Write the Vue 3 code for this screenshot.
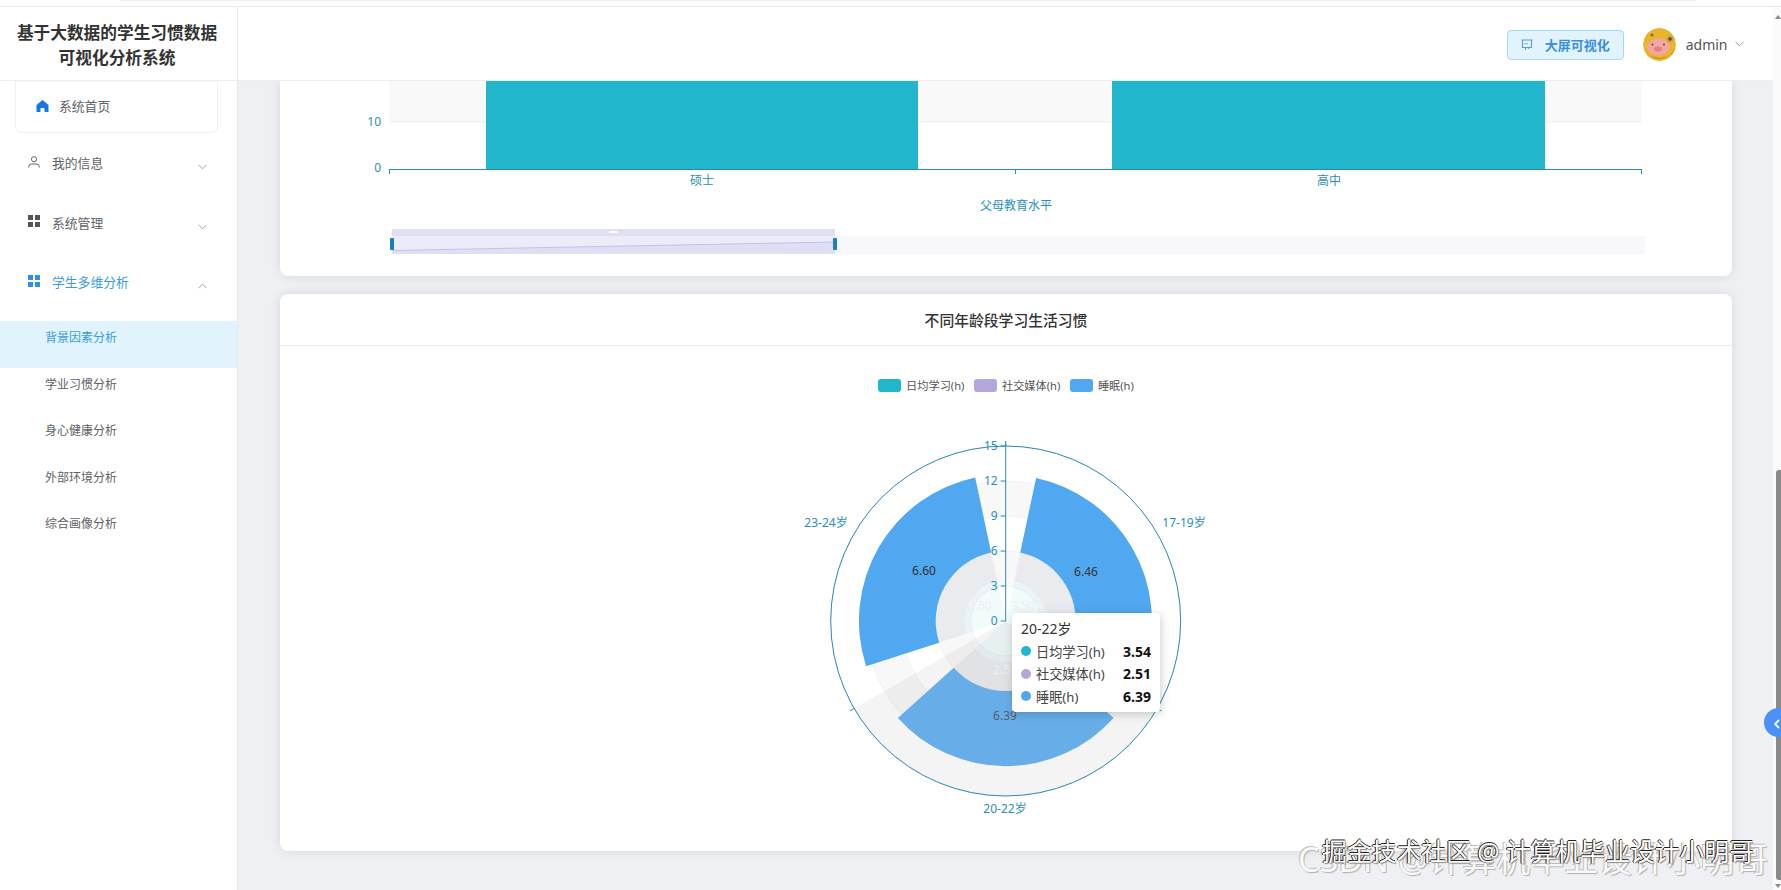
<script setup>
const cx = 1005.7
const cy = 621
const rUnit = 175 / 15

const menus = [
  { name: '我的信息', icon: 'user' },
  { name: '系统管理', icon: 'grid' }
]
const subMenus = ['背景因素分析', '学业习惯分析', '身心健康分析', '外部环境分析', '综合画像分析']

const legend = [
  { name: '日均学习(h)', color: '#22b6cc' },
  { name: '社交媒体(h)', color: '#b3a7dc' },
  { name: '睡眠(h)', color: '#50a8f0' }
]

const ticks = [0, 3, 6, 9, 12, 15]
const rings = [
  { v: 15, fill: '#fff' },
  { v: 12, fill: '#f8f8f9' },
  { v: 9, fill: '#fff' },
  { v: 6, fill: '#f8f8f9' },
  { v: 3, fill: '#fff' }
]

function pt(r, a) {
  const rad = (a * Math.PI) / 180
  return `${(cx + r * Math.sin(rad)).toFixed(2)} ${(cy - r * Math.cos(rad)).toFixed(2)}`
}

function sector(v0, v1, a0, a1) {
  const r0 = v0 * rUnit
  const r1 = v1 * rUnit
  const large = a1 - a0 > 180 ? 1 : 0
  let d = `M${pt(r1, a0)} A${r1} ${r1} 0 ${large} 1 ${pt(r1, a1)} `
  if (r0 > 0) {
    d += `L${pt(r0, a1)} A${r0} ${r0} 0 ${large} 0 ${pt(r0, a0)} Z`
  } else {
    d += `L${cx} ${cy} Z`
  }
  return d
}

const groups = [
  { a0: 12, a1: 108, v: [3.5, 2.57, 6.46] },
  { a0: 132, a1: 228, v: [3.54, 2.51, 6.39], hover: true },
  { a0: 252, a1: 348, v: [3.5, 2.48, 6.6] }
]

const axisMarks = [0, 120, 240]

function markLine(a) {
  return `M${pt(175, a)} L${pt(180, a)}`
}
</script>

<template>
  <div class="page">
    <div class="top-strip"><div class="top-strip-inner"></div></div>
    <div class="layout">
      <aside class="sidebar">
        <div class="logo">基于大数据的学生习惯数据<br />可视化分析系统</div>
        <nav class="menu">
          <div class="menu-home">
            <svg class="home-icon" viewBox="0 0 12 12" width="13" height="12">
              <path d="M6 0 L12 5 V12 H8 V8 H4 V12 H0 V5 Z" fill="#1677e8" />
            </svg>
            <span>系统首页</span>
          </div>
          <div v-for="m in menus" :key="m.name" class="menu-row">
            <svg v-if="m.icon === 'user'" class="menu-icon" viewBox="0 0 12 12" width="12" height="12">
              <circle cx="6" cy="3.2" r="2.6" fill="none" stroke="#666" />
              <path d="M0.8 11.6 V10.6 Q0.8 8 3.4 8 H8.6 Q11.2 8 11.2 10.6 V11.6" fill="none" stroke="#666" />
            </svg>
            <svg v-else class="menu-icon" viewBox="0 0 12 12" width="12" height="12">
              <path d="M0 0h5v5H0zM7 0h5v5H7zM0 7h5v5H0zM7 7h5v5H7z" fill="#555" />
            </svg>
            <span>{{ m.name }}</span>
            <svg class="chevron" viewBox="0 0 10 6" width="9" height="6">
              <path d="M0.5 0.5 L5 5 L9.5 0.5" fill="none" stroke="#999" />
            </svg>
          </div>
          <div class="menu-row menu-row-active">
            <svg class="menu-icon" viewBox="0 0 12 12" width="12" height="12">
              <path d="M0 0h5v5H0zM7 0h5v5H7zM0 7h5v5H0zM7 7h5v5H7z" fill="#2f8fe6" />
            </svg>
            <span>学生多维分析</span>
            <svg class="chevron" viewBox="0 0 10 6" width="9" height="6">
              <path d="M0.5 5.5 L5 1 L9.5 5.5" fill="none" stroke="#999" />
            </svg>
          </div>
          <div class="sub-menu">
            <div
              v-for="(s, i) in subMenus"
              :key="s"
              class="sub-item"
              :class="{ 'sub-item-active': i === 0 }"
            >
              {{ s }}
            </div>
          </div>
        </nav>
      </aside>

      <div class="main">
        <header class="header">
          <button class="screen-btn">
            <svg viewBox="0 0 12 12" width="12" height="12">
              <path
                d="M0.5 1 H11.5 M1.5 1 V8.5 H10.5 V1 M4.5 8.5 V11 M7.5 8.5 V10"
                fill="none"
                stroke="#5a9ae0"
                stroke-width="1.1"
              />
              <path d="M3.4 4h1.2v1.2H3.4zM5.4 4h1.2v1.2H5.4z" fill="#5a9ae0" />
            </svg>
            <span>大屏可视化</span>
          </button>
          <svg class="avatar" viewBox="0 0 33 33" width="33" height="33">
            <circle cx="16.5" cy="16.5" r="16.5" fill="#e9b52f" />
            <path d="M1 20 A16.5 16.5 0 0 0 32 20 Q30 29 16 30 Q4 29 1 20Z" fill="#a97c22" />
            <circle cx="9" cy="7" r="1.6" fill="#8d6a1d" />
            <circle cx="27" cy="11" r="3.6" fill="#c9a24e" />
            <circle cx="27" cy="11" r="1.8" fill="#5d4a26" />
            <ellipse cx="15.5" cy="19" rx="11" ry="8.5" fill="#f3a6a2" />
            <ellipse cx="15" cy="21" rx="4" ry="2.6" fill="#e57f86" />
            <circle cx="9.5" cy="16.5" r="0.9" fill="#6b3a2c" />
            <circle cx="21" cy="16.5" r="0.9" fill="#6b3a2c" />
          </svg>
          <span class="user-name">admin</span>
          <svg class="user-chevron" viewBox="0 0 10 6" width="9" height="6">
            <path d="M0.5 0.5 L5 5 L9.5 0.5" fill="none" stroke="#999" />
          </svg>
        </header>

        <div class="content">
          <section class="card card-bar">
            <svg class="bar-chart" viewBox="280 81 1452 195" width="1452" height="195">
              <rect x="389" y="81" width="1253" height="41" fill="#f9f9fa" />
              <line x1="389" x2="1642" y1="122" y2="122" stroke="#eeeeee" />
              <rect x="486" y="81" width="432" height="88" fill="#22b6cc" />
              <rect x="1112" y="81" width="433" height="88" fill="#22b6cc" />
              <path d="M389 169.5 H1642 M389.5 169 V174 M1015.5 169 V174 M1641.5 169 V174" fill="none" stroke="#2a8cb5" />
              <text x="381" y="126" text-anchor="end" class="axis-text">10</text>
              <text x="381" y="172" text-anchor="end" class="axis-text">0</text>
              <text x="702" y="185" text-anchor="middle" class="axis-text">硕士</text>
              <text x="1329" y="185" text-anchor="middle" class="axis-text">高中</text>
              <text x="1016" y="210" text-anchor="middle" class="axis-text">父母教育水平</text>

              <rect x="835" y="236" width="810" height="18" fill="#f8f8fc" />
              <rect x="392" y="229" width="443" height="25" fill="#ecebf9" />
              <rect x="392" y="229" width="443" height="7" fill="#e0e0f2" />
              <path d="M392 250.5 L835 242 V254 H392 Z" fill="#dfdff4" />
              <path d="M392 250.5 L835 242" stroke="#c3c0ea" fill="none" />
              <rect x="609" y="231" width="8" height="2" fill="#fff" />
              <rect x="390" y="238" width="4" height="12" rx="1" fill="#1a7fc0" />
              <rect x="833" y="238" width="4" height="12" rx="1" fill="#1a7fc0" />
            </svg>
          </section>

          <section class="card card-polar">
            <div class="card-title">不同年龄段学习生活习惯</div>
            <div class="legend">
              <div v-for="l in legend" :key="l.name" class="legend-item">
                <i class="legend-swatch" :style="{ background: l.color }"></i>
                <span>{{ l.name }}</span>
              </div>
            </div>
            <div class="polar-wrap">
              <svg class="polar" viewBox="786 425 440 400" width="440" height="400">
                <circle
                  v-for="r in rings"
                  :key="r.v"
                  :cx="cx"
                  :cy="cy"
                  :r="r.v * rUnit"
                  :fill="r.fill"
                  stroke="#f2f2f2"
                />
                <path :d="sector(0, 15, 120, 240)" fill="rgba(150,150,150,0.1)" />

                <g v-for="g in groups" :key="g.a0">
                  <path :d="sector(0, g.v[0], g.a0, g.a1)" fill="#22b6cc" opacity="0.06" />
                  <path :d="sector(g.v[0], g.v[0] + g.v[1], g.a0, g.a1)" fill="#a8aab8" opacity="0.17" />
                  <path
                    :d="sector(6, g.v[0] + g.v[1] + g.v[2], g.a0, g.a1)"
                    :fill="g.hover ? '#67aee8' : '#50a8f0'"
                  />
                </g>

                <circle :cx="cx" :cy="cy" r="175" fill="none" stroke="#2a8cb5" />
                <path v-for="a in axisMarks" :key="a" :d="markLine(a)" stroke="#2a8cb5" fill="none" />
                <line :x1="cx" :x2="cx" :y1="cy" :y2="cy - 178" stroke="#2a8cb5" />
                <g v-for="t in ticks" :key="t">
                  <line :x1="cx - 5" :x2="cx" :y1="cy - t * rUnit" :y2="cy - t * rUnit" stroke="#2a8cb5" />
                  <text :x="cx - 8" :y="cy - t * rUnit + 4" text-anchor="end" class="axis-text">{{ t }}</text>
                </g>

                <text x="826" y="527" text-anchor="middle" class="axis-text">23-24岁</text>
                <text x="1184" y="527" text-anchor="middle" class="axis-text">17-19岁</text>
                <text x="1005" y="813" text-anchor="middle" class="axis-text">20-22岁</text>

                <text x="924" y="575" text-anchor="middle" class="val-text">6.60</text>
                <text x="1086" y="576" text-anchor="middle" class="val-text">6.46</text>
                <text x="1005" y="720" text-anchor="middle" class="val-text val-hover">6.39</text>
                <text x="966" y="601" text-anchor="middle" class="val-faint">2.48</text>
                <text x="1045" y="601" text-anchor="middle" class="val-faint">2.57</text>
                <text x="980" y="610" text-anchor="middle" class="val-faint">3.50</text>
                <text x="1023" y="610" text-anchor="middle" class="val-faint">3.50</text>
                <text x="1005" y="674" text-anchor="middle" class="val-faint">2.51</text>
              </svg>

              <div class="tooltip">
                <div class="tooltip-title">20-22岁</div>
                <div v-for="(l, i) in legend" :key="l.name" class="tooltip-row">
                  <i class="tooltip-dot" :style="{ background: l.color }"></i>
                  <span class="tooltip-name">{{ l.name }}</span>
                  <b class="tooltip-val">{{ groups[1].v[i].toFixed(2) }}</b>
                </div>
              </div>
            </div>
          </section>
        </div>
      </div>

      <div class="scrollbar">
        <i class="scroll-up"></i>
        <div class="scroll-space"></div>
        <div class="scroll-thumb"></div>
        <i class="scroll-down"></i>
      </div>
    </div>

    <div class="float-btn">
      <svg viewBox="0 0 6 10" width="6" height="10">
        <path d="M5 1 L1 5 L5 9" fill="none" stroke="#fff" stroke-width="1.8" />
      </svg>
    </div>
    <div class="mark-csdn">CSDN @计算机毕业设计小明哥</div>
    <div class="mark-juejin">掘金技术社区 @ 计算机毕业设计小明哥</div>
  </div>
</template>

<style scoped>
.page {
  position: relative;
  width: 1781px;
  height: 890px;
  overflow: hidden;
  display: flex;
  flex-direction: column;
  background: #fff;
  font-family: 'Noto Sans', 'Noto Sans CJK SC', sans-serif;
}
.top-strip {
  height: 6px;
  border-bottom: 1px solid #e9e9e9;
  flex-shrink: 0;
}
.top-strip-inner {
  width: 1576px;
  height: 1px;
  margin-left: 120px;
  background: #efefef;
}
.layout {
  flex: 1;
  display: flex;
  min-height: 0;
}

.sidebar {
  width: 238px;
  flex-shrink: 0;
  border-right: 1px solid #e8e9ec;
  box-sizing: border-box;
  background: #fff;
}
.logo {
  height: 74px;
  box-sizing: border-box;
  padding: 14px 3px 0 0;
  text-align: center;
  font-size: 16.7px;
  line-height: 24.5px;
  font-weight: 700;
  color: #333;
  border-bottom: 1px solid #eceef0;
}
.menu {
  display: flex;
  flex-direction: column;
  font-size: 12.8px;
  color: #606266;
}
.menu-home {
  display: flex;
  align-items: center;
  height: 52px;
  box-sizing: border-box;
  margin: 0 19px 0 15px;
  padding: 0 0 3px 20px;
  gap: 10px;
  border: 1px solid #eef0f3;
  border-top-color: #f6f6f6;
  border-radius: 0 0 7px 7px;
}
.home-icon {
  flex-shrink: 0;
}
.menu-row {
  position: relative;
  display: flex;
  align-items: center;
  height: 59.5px;
  padding-left: 28px;
  gap: 12px;
}
.menu-icon {
  position: relative;
  top: -1px;
}
.chevron {
  position: absolute;
  left: 198px;
  top: 31px;
}
.menu-row-active {
  color: #3a9be6;
}
.sub-menu {
  margin-top: 9.5px;
  font-size: 12px;
}
.sub-item {
  height: 46.6px;
  box-sizing: border-box;
  padding: 8px 0 0 45px;
  line-height: 18px;
}
.sub-item-active {
  background: #e1f4fe;
  color: #3a9be6;
}

.main {
  flex: 1;
  min-width: 0;
  display: flex;
  flex-direction: column;
  background: #eef0f4;
}
.header {
  position: relative;
  z-index: 2;
  height: 74px;
  flex-shrink: 0;
  box-sizing: border-box;
  display: flex;
  align-items: center;
  justify-content: flex-end;
  padding: 2px 29px 0 0;
  background: #fff;
  border-bottom: 1px solid #eceef0;
}
.screen-btn {
  display: flex;
  align-items: center;
  gap: 12px;
  width: 117px;
  height: 30px;
  margin: 0 19px 0 0;
  padding: 0 0 0 13px;
  background: #e1f4fe;
  border: 1px solid #a8d8f0;
  border-radius: 4px;
  color: #3a8ee0;
  font-family: inherit;
  font-size: 13px;
  font-weight: 700;
}
.avatar {
  border-radius: 50%;
}
.user-name {
  margin-left: 10px;
  font-size: 14px;
  color: #555;
}
.user-chevron {
  margin-left: 7.5px;
  margin-top: -2px;
}

.content {
  flex: 1;
  min-height: 0;
  overflow: hidden;
  display: flex;
  flex-direction: column;
  gap: 18px;
  padding: 0 41px 0 42px;
}
.card {
  flex-shrink: 0;
  background: #fff;
  box-shadow: 0 0 12px rgba(0, 0, 0, 0.1);
}
.card-bar {
  height: 195px;
  border-radius: 0 0 8px 8px;
}
.bar-chart {
  display: block;
}
.card-polar {
  height: 557px;
  border-radius: 8px;
}
.card-title {
  height: 52px;
  box-sizing: border-box;
  padding-top: 15px;
  text-align: center;
  font-size: 14.8px;
  line-height: 22px;
  font-weight: 500;
  color: #333;
  border-bottom: 1px solid #e8e9ec;
}
.legend {
  display: flex;
  justify-content: center;
  gap: 9.5px;
  margin-top: 33px;
  height: 13px;
  font-size: 11.2px;
  line-height: 13px;
  color: #555;
}
.legend-item {
  display: flex;
  align-items: center;
  gap: 5px;
}
.legend-swatch {
  width: 23px;
  height: 13px;
  border-radius: 3px;
}
.polar-wrap {
  position: relative;
  width: 440px;
  height: 400px;
  margin: 33px auto 0;
}
.polar {
  display: block;
}
.axis-text {
  font-size: 12px;
  fill: #2a8fb8;
}
.val-text {
  font-size: 12px;
  fill: #333;
}
.val-hover {
  fill: #55606c;
}
.val-faint {
  font-size: 12px;
  fill: #eeeef2;
}
.tooltip {
  position: absolute;
  left: 226px;
  top: 188px;
  width: 148px;
  height: 99px;
  box-sizing: border-box;
  padding: 7px 9px;
  background: #fff;
  border-radius: 4px;
  box-shadow: 1px 2px 10px rgba(0, 0, 0, 0.2);
  font-size: 14px;
  color: #444;
}
.tooltip-title {
  line-height: 18px;
  color: #333;
  margin-bottom: 2px;
}
.tooltip-row {
  display: flex;
  align-items: center;
  height: 22.5px;
}
.tooltip-dot {
  width: 10px;
  height: 10px;
  border-radius: 50%;
  margin-right: 5px;
}
.tooltip-name {
  flex: 1;
  font-size: 13.2px;
}
.tooltip-val {
  color: #111;
  font-weight: 700;
}

.scrollbar {
  width: 8px;
  flex-shrink: 0;
  display: flex;
  flex-direction: column;
  align-items: flex-end;
  background: #fbfbfb;
}
.scroll-up {
  margin-top: 8px;
  border-left: 3px solid transparent;
  border-right: 3px solid transparent;
  border-bottom: 4px solid #8a8a8a;
}
.scroll-space {
  flex: 1;
}
.scroll-thumb {
  width: 5px;
  height: 410px;
  background: #8a8a8a;
  border-radius: 3px 0 0 3px;
}
.scroll-down {
  margin: 4px 0 2px;
  border-left: 3px solid transparent;
  border-right: 3px solid transparent;
  border-top: 4px solid #8a8a8a;
}

.float-btn {
  position: absolute;
  left: 1764px;
  top: 708px;
  width: 29px;
  height: 29px;
  border-radius: 50%;
  background: #4a90f5;
  box-sizing: border-box;
  padding: 4px 0 0 10px;
}
.mark-csdn {
  position: absolute;
  left: 1298px;
  top: 839px;
  font-size: 34px;
  line-height: 40px;
  white-space: nowrap;
  color: #f8f8f8;
  text-shadow: -1px -1px 0 #c0c0c0, 1px 1px 1px #b0b0b0;
}
.mark-juejin {
  position: absolute;
  left: 1322px;
  top: 834px;
  font-size: 24.8px;
  line-height: 34px;
  white-space: nowrap;
  color: #fff;
  text-shadow: -1px 0 0 #111, 0 -1px 0 #222, 1px 1px 1px #888;
}
</style>

<style>
html,
body {
  margin: 0;
  overflow: hidden;
}
</style>
